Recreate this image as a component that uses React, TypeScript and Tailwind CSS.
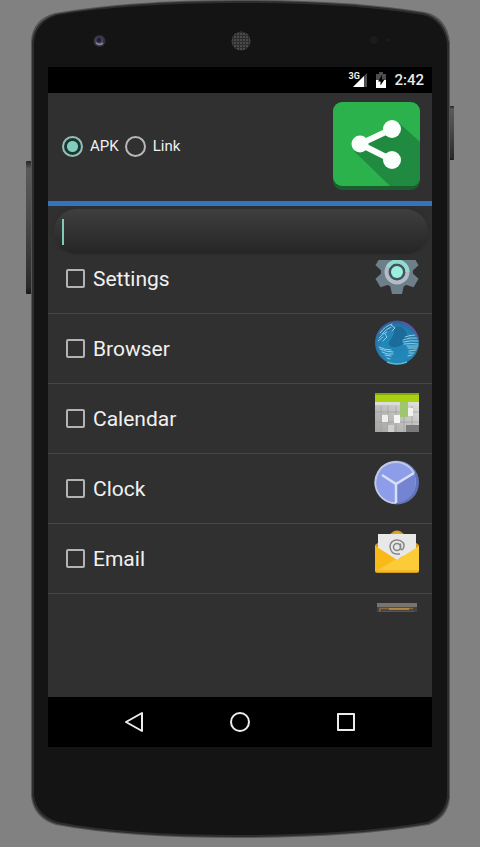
import React, { useState } from "react";

function PhoneBody() {
  return (
    <svg
      className="absolute inset-0 h-full w-full"
      viewBox="0 0 480 847"
      preserveAspectRatio="none"
      aria-hidden="true"
    >
      <defs>
        <linearGradient id="button-metal" x1="0" x2="0" y1="0" y2="1">
          <stop offset="0" stopColor="#242424" />
          <stop offset="0.06" stopColor="#5a5a5a" />
          <stop offset="0.4" stopColor="#4b4b4b" />
          <stop offset="0.95" stopColor="#2b2b2b" />
          <stop offset="1" stopColor="#161616" />
        </linearGradient>
        <pattern id="speaker-mesh" width="3" height="3" patternUnits="userSpaceOnUse">
          <rect width="3" height="3" fill="#2e2e2e" />
          <circle cx="1" cy="1" r="0.8" fill="#6e6e6e" />
        </pattern>
      </defs>
      <rect x="26" y="161" width="7" height="133" rx="1" fill="url(#button-metal)" />
      <rect x="448" y="106" width="6" height="54" rx="1" fill="url(#button-metal)" />
      <path
        d="M31 42 Q32 19 55 13 Q130 0 240 0 Q350 0 425 12 Q447 17 450 42 V798 Q448 818 429 825 Q350 838 240 838 Q125 838 56 825 Q33 818 31 796 Z"
        fill="#555555"
      />
      <path
        d="M32 42 Q34 21 56 14 Q130 1 240 1 Q350 1 424 13 Q445 19 449 43 V798 Q446 817 428 824 Q350 837 240 837 Q125 837 57 824 Q35 817 32 796 Z"
        fill="#2d2d2d"
      />
      <path
        d="M34 42 Q36 22 57 15 Q130 3 240 3 Q350 3 423 15 Q443 20 447 43 V797 Q444 815 427 822 Q350 835 240 835 Q125 835 58 822 Q37 815 34 796 Z"
        fill="#141414"
      />
      <circle cx="99.500" cy="41" r="6" fill="#33313b" />
      <circle cx="99" cy="41" r="4" fill="#4d4963" />
      <circle cx="99" cy="40" r="2.500" fill="#22203a" />
      <path d="M96 43 q4 3 7 0" stroke="#8f8d9c" strokeWidth="1.500" fill="none" />
      <circle cx="241" cy="41" r="9.500" fill="url(#speaker-mesh)" />
      <circle cx="374" cy="40" r="4" fill="#1d1c1d" />
      <circle cx="388" cy="40" r="2" fill="#1d1c1d" />
    </svg>
  );
}

function SignalIcon() {
  return (
    <svg className="h-4 w-5" viewBox="0 0 20 16" aria-hidden="true">
      <path d="M19 1 V15 H5 Z" fill="#4d4d4d" />
      <path d="M16 4 V15 H5 Z" fill="#ffffff" />
    </svg>
  );
}

function BatteryIcon() {
  return (
    <svg className="h-4 w-3" viewBox="0 0 12 16" aria-hidden="true">
      <path d="M4 0 H8 V2 H11 V9 H1 V2 H4 Z" fill="#4d4d4d" />
      <path d="M1 8 H11 V16 H1 Z" fill="#ffffff" />
      <path d="M7 3 L3 9.500 H5.500 V13.500 L9.500 7.500 H7 Z" fill="#000000" />
    </svg>
  );
}

function ShareLogo() {
  return (
    <svg className="h-[88px] w-[88px]" viewBox="0 0 88 88" role="img" aria-label="Share">
      <rect x="1" y="4" width="87" height="84" rx="9" fill="#1b5e2d" />
      <rect x="1" y="0" width="87" height="84" rx="9" fill="#2bb24c" />
      <path d="M66 20 L88 40 V75 Q88 84 79 84 H58 L22 49 Z" fill="#1f8a40" />
      <path d="M60 27 L28 42 L60 58" stroke="#fbfffb" strokeWidth="6" fill="none" />
      <circle cx="28" cy="42" r="8.500" fill="#fbfffb" />
      <circle cx="60" cy="27" r="9" fill="#fbfffb" />
      <circle cx="60" cy="58" r="9" fill="#fbfffb" />
    </svg>
  );
}

function SettingsIcon() {
  return (
    <svg className="h-[46px] w-[46px]" viewBox="0 0 46 46" aria-hidden="true">
      <g fill="#6d7f89">
        <circle cx="23" cy="22" r="16" />
        {[0, 60, 120, 180, 240, 300].map((a) => (
          <path key={a} d="M16 9 L18 0 H28 L30 9 Z" transform={`rotate(${a} 23 22)`} />
        ))}
      </g>
      <circle cx="23" cy="22" r="10.500" fill="#42545c" stroke="#b4bcc8" strokeWidth="4" />
      <path d="M13.900 16.700 A10.500 10.500 0 0 1 33.500 22" stroke="#8fdccd" strokeWidth="4" fill="none" />
      <circle cx="23" cy="22" r="6" fill="#9af0dd" />
    </svg>
  );
}

function BrowserIcon() {
  return (
    <svg className="h-[46px] w-[46px]" viewBox="0 0 46 46" aria-hidden="true">
      <defs>
        <radialGradient id="globe" cx="0.5" cy="0.6" r="0.6">
          <stop offset="0" stopColor="#1f85b5" />
          <stop offset="0.55" stopColor="#2387b8" />
          <stop offset="0.85" stopColor="#2674a6" />
          <stop offset="1" stopColor="#3a5494" />
        </radialGradient>
      </defs>
      <circle cx="23" cy="22.500" r="22" fill="url(#globe)" />
      <path d="M20 8 Q27 4 31 10 Q36 17 31 22 Q26 28 18 27 Q12 24 17 19 Q21 14 20 8 Z" fill="#1b6c9b" />
      <g stroke="#93cde2" strokeWidth="1" fill="none" strokeLinecap="round">
        <path d="M6 13 Q11 6 18 4 M8 14 Q12 9 17 7 M5 18 Q8 14 13 12 M4 21 L9 17 M17 5 L21 8 L18 11 M11 14 L13 17 L9 21" />
        <path d="M5 27 Q11 30 17 30 M6 29 Q12 32 19 32 M8 32 Q13 35 19 34 M11 35 L17 36 M13 38 L16 39" />
        <path d="M31 17 Q36 15 41 15 M29 20 Q36 17 43 18 M29 22 Q37 20 44 21 M30 24 Q38 23 44 24 M33 26 L44 26 M34 28 L43 28 M35 31 L42 30 M35 33 L40 33 M34 36 L38 35" />
      </g>
      <path d="M28 2 Q40 6 44 18" stroke="#6a4fa8" strokeWidth="1.500" fill="none" />
      <path d="M13 42 Q23 46 33 42" stroke="#54bdd0" strokeWidth="1.500" fill="none" />
    </svg>
  );
}

function CalendarIcon() {
  return (
    <svg className="h-[46px] w-[46px]" viewBox="0 0 46 46" aria-hidden="true">
      <defs>
        <linearGradient id="calendar-page" x1="1" x2="0" y1="0" y2="1">
          <stop offset="0" stopColor="#dededc" />
          <stop offset="1" stopColor="#a3a3a2" />
        </linearGradient>
      </defs>
      <rect x="1" y="11" width="44" height="31" fill="url(#calendar-page)" />
      <path d="M1 22 H45 M1 32 H45 M7 16 V42 M14 16 V42 M22 16 V42 M30 16 V42 M38 16 V42" stroke="#9f9f9e" strokeWidth="0.700" />
      <path d="M1 12 H45 V15 H1 Z" fill="#dcdcda" />
      <path d="M1 3 H45 V12 H1 Z" fill="#a9d111" />
      <path d="M1 3 H45 V5 H1 Z" fill="#86ab08" />
      <path d="M32 35 H45 V42 H32 Z" fill="#7b7b7b" />
      <rect x="8" y="25" width="6" height="7" fill="#eeeeec" />
      <rect x="20" y="25" width="6" height="8" fill="#f5f5f3" />
      <rect x="34" y="18" width="5" height="8" fill="#f1f1ef" />
      <rect x="26" y="12" width="8" height="15" fill="#9fc66e" />
      <path d="M14 35 H20 V42 H14 Z" fill="#d0d0cf" />
    </svg>
  );
}

function ClockIcon() {
  return (
    <svg className="h-[46px] w-[46px]" viewBox="0 0 46 46" aria-hidden="true">
      <circle cx="23" cy="22.500" r="22" fill="#6172b8" />
      <circle cx="22" cy="22" r="20" fill="#8d9de9" />
      <path d="M22 24 L40 13 Q45 31 33 39 Q28 43 22 43 Z" fill="#7484d2" />
      <path d="M40 13 A20.500 20.500 0 1 0 22 43" fill="none" stroke="#c2c9e5" strokeWidth="2" />
      <path d="M8 15 L22 24 L40 13 M22 24 V43" stroke="#d8e0f5" strokeWidth="2.500" fill="none" />
    </svg>
  );
}

function EmailIcon() {
  return (
    <svg className="h-[46px] w-[46px]" viewBox="0 0 46 46" aria-hidden="true">
      <path d="M1 15 L20 1 Q23 0 26 1 L45 15 V41 Q45 43 43 43 H3 Q1 43 1 41 Z" fill="#d39a1d" />
      <path d="M4 4 H42 V26 H4 Z" fill="#e8e8e8" />
      <path d="M19 4 Q23 -1 27 4 Z" fill="#e1a72a" />
      <path d="M1 16 L23 30 L45 16 V40 Q45 42 43 42 H3 Q1 42 1 40 Z" fill="#fccc38" />
      <path d="M1 16 L22 29 L2 41 L1 39 Z" fill="#f9b916" />
      <path d="M4 17 L23 30 L42 17 V12 H4 Z" fill="#e8e8e8" />
      <path d="M2 41 H44" stroke="#eeb52a" strokeWidth="1.500" />
      <g fill="none" stroke="#858585" strokeWidth="1.500">
        <circle cx="23" cy="17" r="3.500" />
        <path d="M26.500 13.500 V18 Q27 21 29 19 Q31 15 29 12.500 Q26 9.500 22 10 Q16 11 16 17 Q17 24 23 24 H26" />
      </g>
    </svg>
  );
}

function DrawerIcon() {
  return (
    <svg className="h-[46px] w-[46px]" viewBox="0 0 46 46" aria-hidden="true">
      <rect x="3" y="1" width="40" height="45" fill="#454443" />
      <rect x="3" y="1" width="40" height="4" fill="#77736f" />
      <path d="M6 11 V6.500 H39" stroke="#8a6841" strokeWidth="1.500" fill="none" />
      <path d="M15 7 H35" stroke="#c29248" strokeWidth="1.500" />
      <rect x="8" y="9" width="32" height="37" fill="#625547" />
    </svg>
  );
}

const apps = [
  { name: "Settings", Icon: SettingsIcon },
  { name: "Browser", Icon: BrowserIcon },
  { name: "Calendar", Icon: CalendarIcon },
  { name: "Clock", Icon: ClockIcon },
  { name: "Email", Icon: EmailIcon },
];

const radioStyle =
  "h-[21px] w-[21px] shrink-0 appearance-none rounded-full border-2 border-[#b8b8b8] outline-none checked:border-[#9bbdb6] checked:bg-[radial-gradient(circle,#84cdbe_5px,#173b34_6px)]";

export default function App() {
  const [mode, setMode] = useState("apk");
  const [query, setQuery] = useState("");

  return (
    <div className="relative flex min-h-screen flex-col bg-[#818181] px-12 pt-[67px] pb-[100px] font-[Roboto,sans-serif] text-[#f0f0f0]">
      <PhoneBody />
      <main className="relative flex flex-1 flex-col bg-[#303030]">
        <div className="flex h-[26px] items-center justify-end bg-black pr-2">
          <div className="relative mr-[7px] flex">
            <span className="absolute top-0 left-0 text-[9px] leading-[9px] font-bold">3G</span>
            <SignalIcon />
          </div>
          <BatteryIcon />
          <time className="ml-[7px] text-[15px] leading-5 font-medium text-[#e8e8e8]">2:42</time>
        </div>

        <header className="flex h-[108px] items-center justify-between pr-3 pb-[2px] pl-[14px]">
          <div className="flex items-center text-[15px] leading-5">
            <label className="flex items-center gap-[7px]">
              <input type="radio" name="mode" className={radioStyle} checked={mode === "apk"} onChange={() => setMode("apk")} />
              APK
            </label>
            <label className="ml-[6px] flex items-center gap-[7px]">
              <input type="radio" name="mode" className={radioStyle} checked={mode === "link"} onChange={() => setMode("link")} />
              Link
            </label>
          </div>
          <ShareLogo />
        </header>

        <div className="h-[5px] bg-[#3274c2]" />

        <div className="relative mx-1 mt-[3px] mb-[6px] ml-[6px]">
          <input
            type="text"
            aria-label="Search apps"
            value={query}
            onChange={(e) => setQuery(e.target.value)}
            className="block h-[45px] w-full rounded-3xl bg-linear-to-b from-[#3f3f3f] to-[#252525] px-2 text-lg caret-[#80cbc4] shadow-[0_0_3px_#292929] outline-none"
          />
          <span className="pointer-events-none absolute top-[10px] left-2 h-[26px] w-[2px] bg-[#80cbb8]" />
        </div>

        <div className="h-[352px] overflow-hidden">
          <ul className="-mt-4">
            {apps.map(({ name, Icon }) => (
              <li key={name} className="flex h-[70px] justify-between border-b border-[#464646] pr-3 pl-[18px]">
                <label className="flex flex-1 items-center gap-2 text-[21px] leading-7">
                  <input
                    type="checkbox"
                    className="h-[19px] w-[19px] shrink-0 appearance-none rounded-[2px] border-2 border-[#b3b3b3] checked:bg-[#80cbc4]"
                  />
                  {name}
                </label>
                <div className="pt-[6px]">
                  <Icon />
                </div>
              </li>
            ))}
            <li className="flex h-[70px] justify-end pt-2 pr-3">
              <DrawerIcon />
            </li>
          </ul>
        </div>

        <nav className="mt-auto flex h-[50px] items-center justify-center gap-[82px] bg-black">
          <button type="button" aria-label="Back">
            <svg className="h-6 w-6" viewBox="0 0 24 24" fill="none" stroke="#ececec" strokeWidth="2" strokeLinejoin="round">
              <path d="M20 3 V21 L4 12 Z" />
            </svg>
          </button>
          <button type="button" aria-label="Home">
            <svg className="h-6 w-6" viewBox="0 0 24 24" fill="none" stroke="#ececec" strokeWidth="2">
              <circle cx="12" cy="12" r="9" />
            </svg>
          </button>
          <button type="button" aria-label="Recent apps">
            <svg className="h-6 w-6" viewBox="0 0 24 24" fill="none" stroke="#ececec" strokeWidth="2" strokeLinejoin="round">
              <rect x="4" y="4" width="16" height="16" />
            </svg>
          </button>
        </nav>
      </main>
    </div>
  );
}
